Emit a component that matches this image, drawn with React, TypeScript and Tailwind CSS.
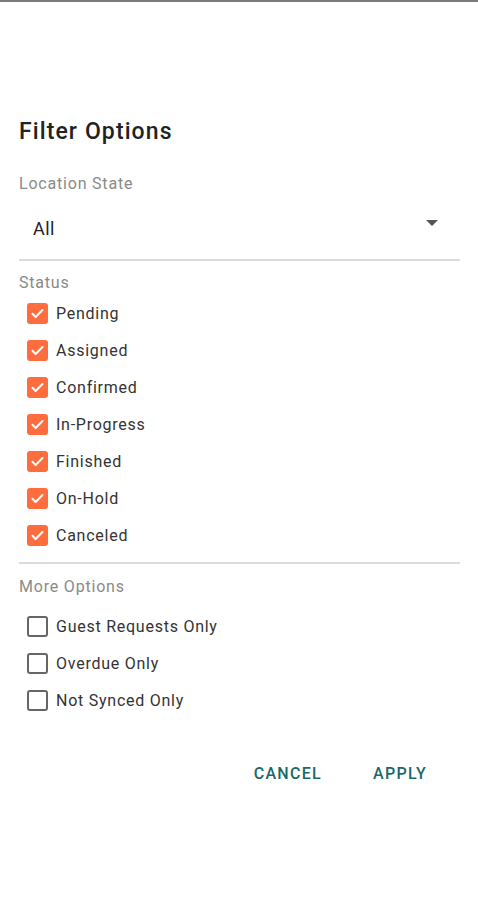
const STATUSES = ['Pending', 'Assigned', 'Confirmed', 'In-Progress', 'Finished', 'On-Hold', 'Canceled'];
const MORE = ['Guest Requests Only', 'Overdue Only', 'Not Synced Only'];

function Check({ checked, label }: { checked: boolean; label: string }) {
    return (
        <div className="flex items-center h-[37px] pl-[27px]">
            {checked ? (
                <div className="w-[21px] h-[21px] rounded-[3px] bg-[#ff6d3f] flex items-center justify-center">
                    <svg width="15" height="15" viewBox="0 0 24 24" fill="none" stroke="white" strokeWidth="3.2" strokeLinecap="round" strokeLinejoin="round">
                        <path d="M4 12.5l5 5L20 6.5" />
                    </svg>
                </div>
            ) : (
                <div className="w-[21px] h-[21px] rounded-[3px] border-2 border-[#666]" />
            )}
            <span className="ml-[8px] text-[16px] text-[#333] tracking-[0.75px]">{label}</span>
        </div>
    );
}

export default function App() {
    return (
        <div className="w-[478px] h-[900px] bg-white" style={{ fontFamily: 'Roboto, "Noto Sans", sans-serif' }}>
            <div className="h-[2px] bg-[#7a7a7a]" />
            <div className="pt-[116px] px-[19px] pr-[18px]">
                <h2 className="h-[28px] leading-[28px] text-[23px] font-medium text-[#222] tracking-[1.1px]">Filter Options</h2>
                <div className="mt-[28px] h-[20px] leading-[20px] text-[16px] text-[#8a8a8a] tracking-[0.8px]">Location State</div>
                <div className="mt-[22px] h-[24px] flex items-center justify-between pl-[14px] pr-[22px]">
                    <span className="text-[18px] text-[#222] tracking-[0.5px]">All</span>
                    <svg width="12" height="6" viewBox="0 0 12 6" className="-mt-[10px]">
                        <path d="M0 0h12L6 6z" fill="#555" />
                    </svg>
                </div>
                <div className="mt-[19px] h-[2px] bg-[#dcdcdc]" />
                <div className="mt-[12px] h-[20px] leading-[20px] text-[16px] text-[#8a8a8a] tracking-[0.8px]">Status</div>
            </div>
            <div className="mt-[2px]">
                {STATUSES.map((s) => (
                    <Check key={s} checked label={s} />
                ))}
            </div>
            <div className="px-[19px] pr-[18px]">
                <div className="mt-[8px] h-[2px] bg-[#dcdcdc]" />
                <div className="mt-[13px] h-[20px] leading-[20px] text-[16px] text-[#8a8a8a] tracking-[0.8px]">More Options</div>
            </div>
            <div className="mt-[11px]">
                {MORE.map((s) => (
                    <Check key={s} checked={false} label={s} />
                ))}
            </div>
            <div className="mt-[45px] flex justify-end gap-[51px] pr-[51px]">
                <button className="h-[20px] leading-[20px] text-[16px] font-medium text-[#1a6868] tracking-[1.3px]">CANCEL</button>
                <button className="h-[20px] leading-[20px] text-[16px] font-medium text-[#1a6868] tracking-[1.3px]">APPLY</button>
            </div>
        </div>
    );
}
